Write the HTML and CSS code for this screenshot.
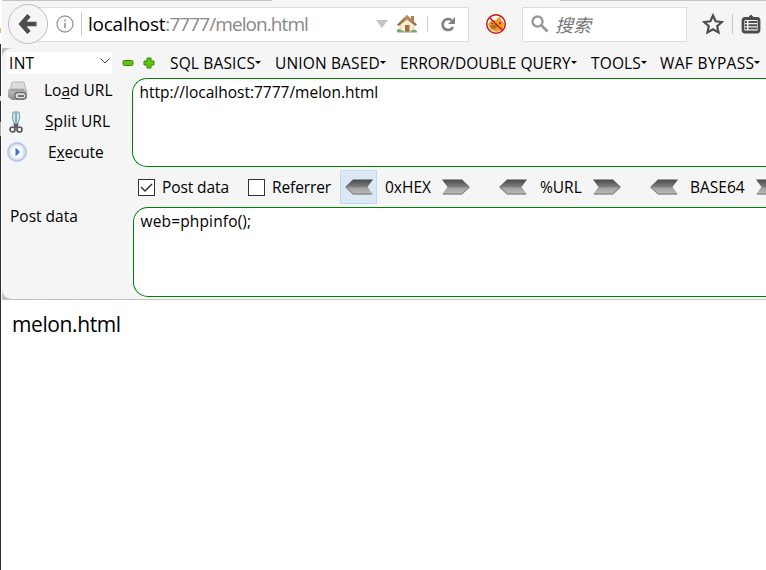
FILE: index.html
```html
<!DOCTYPE html>
<html lang="zh-CN">
<head>
<meta charset="utf-8">
<title>melon.html</title>
<link rel="stylesheet" href="styles.css">
</head>
<body>
<svg width="0" height="0" class="defs">
  <defs>
    <linearGradient id="metal" x1="0" y1="0" x2="0" y2="1">
      <stop offset="0" stop-color="#484848"/><stop offset=".5" stop-color="#808080"/>
      <stop offset=".55" stop-color="#a0a0a0"/><stop offset="1" stop-color="#bcbcbc"/>
    </linearGradient>
    <linearGradient id="roof" x1="0" y1="0" x2="0" y2="1">
      <stop offset="0" stop-color="#c99a5c"/><stop offset="1" stop-color="#8b6748"/>
    </linearGradient>
    <linearGradient id="printer" x1="0" y1="0" x2="0" y2="1">
      <stop offset="0" stop-color="#c8c8c8"/><stop offset="1" stop-color="#8c8c8c"/>
    </linearGradient>
    <symbol id="arrow-left" viewBox="0 0 28 16">
      <path d="M0 8 8 .5H28L22.500 8l5.500 7.500H8Z" fill="url(#metal)"/>
      <path d="M1 8.500l7 6.500h19" fill="none" stroke="#777"/>
    </symbol>
    <symbol id="arrow-right" viewBox="0 0 28 16">
      <path d="M28 8 20 .5H0L5.500 8 0 15.500h20Z" fill="url(#metal)"/>
      <path d="M27 8.500l-7 6.500H1" fill="none" stroke="#777"/>
    </symbol>
  </defs>
</svg>
<div class="window">
  <header class="nav">
    <button class="back" aria-label="Back"><svg width="20" height="20" viewBox="0 0 20 20"><path d="M11 1.500 3.500 10l7.500 8.500M4 10h14.500" fill="none" stroke="#4d4d4d" stroke-width="4.500"/></svg></button>
    <div class="address">
      <svg class="info" width="18" height="18" viewBox="0 0 18 18"><circle cx="9" cy="9" r="8" fill="none" stroke="#999" stroke-width="1.300"/><path d="M9 8v5M9 4.500v2" stroke="#999" stroke-width="1.700"/></svg>
      <span class="url"><b>localhost</b>:7777/melon.html</span>
      <svg class="drop" width="12" height="10" viewBox="0 0 12 10"><path d="M0 1h12L6 9Z" fill="#c4c4c4"/></svg>
      <svg class="home" width="20" height="20" viewBox="0 0 20 20"><path d="M3 9.500 10 3l7 6.500V18H3Z" fill="#f7ecd2" stroke="#c9b899" stroke-width=".6"/><path d="M14 2h3v6l-3-3Z" fill="#b77a52"/><path d="M0 10.500 10 .7l10 9.800-1.700 1.500L10 5.500 1.700 12Z" fill="url(#roof)"/><path d="M8 11h4.500v7H8Z" fill="#a96c3f"/><path d="M0 16q2-2 4 0 2 0 3 2H0ZM14 18q0-3 3-2 3-1 3 2Z" fill="#6aaa60"/><path d="M0 17.500h20v1H0Z" fill="#a4a39a"/></svg>
      <svg class="reload" width="16" height="16" viewBox="0 0 16 16"><path d="M11.400 4.100A5.500 5.500 0 1 0 13 11" fill="none" stroke="#808080" stroke-width="2.700"/><path d="M15 1v7H8Z" fill="#808080"/></svg>
    </div>
    <svg class="blocked" width="22" height="22" viewBox="0 0 22 22"><path d="m3 11 3-3 5-1 4-4 1 4 3 3-1 6-6 3-6-2Z" fill="#ef9b24"/><path d="M5 13q5-3 8 0l-3 3-4-1Z" fill="#b66c25"/><path d="m14 9 2 1-2 1M6 10l2 1" stroke="#5a3821" fill="none"/><circle cx="11" cy="11" r="9.300" fill="none" stroke="#d01717" stroke-width="1.500"/><path d="m4.500 4.500 13 13" stroke="#d01717" stroke-width="1.500"/></svg>
    <div class="search"><svg width="18" height="18" viewBox="0 0 18 18"><circle cx="6.500" cy="6.500" r="5" fill="none" stroke="#999" stroke-width="2.400"/><path d="m10.500 10.500 6 6" stroke="#999" stroke-width="2.800"/></svg><i>搜索</i></div>
    <svg class="star" width="22" height="22" viewBox="0 0 22 22"><path d="m11 2.500 2.600 5.800 6.200.7-4.600 4.200 1.300 6.200L11 16.300l-5.500 3.100 1.300-6.200L2.200 9l6.200-.7Z" fill="none" stroke="#4d4d4d" stroke-width="2.200"/></svg>
    <svg class="clip" width="20" height="20" viewBox="0 0 20 20"><path d="M6 4.500 10 .5l4 4Z" fill="#4d4d4d"/><rect x="2" y="4.500" width="16" height="13.500" rx="2" fill="none" stroke="#4d4d4d" stroke-width="2.800"/><path d="M4 8h2M4 11.200h2M4 14.400h2M7.500 8H16M7.500 11.200H16M7.500 14.400H16" stroke="#4d4d4d" stroke-width="1.900"/></svg>
  </header>
  <div class="toolbox">
  <section class="hackbar">
    <div class="menu">
      <div class="select"><span>INT</span><svg width="10" height="6" viewBox="0 0 10 6"><path d="m.5.5 4.500 4.500L9.500.5" fill="none" stroke="#444"/></svg></div>
      <svg class="minus" width="12" height="12" viewBox="0 0 12 12"><rect x="1" y="3.500" width="10" height="5" rx="1.500" fill="#5fc60c" stroke="#368606"/></svg>
      <svg class="plus" width="12" height="12" viewBox="0 0 12 12"><path d="M4 1h4v3h3v4H8v3H4V8H1V4h3Z" fill="#5fc60c" stroke="#368606" stroke-linejoin="round"/></svg>
      <span class="item m1">SQL BASICS</span><span class="item m2">UNION BASED</span><span class="item m3">ERROR/DOUBLE QUERY</span><span class="item m4">TOOLS</span><span class="item m5">WAF BYPASS</span>
    </div>
    <div class="row main-row">
      <div class="actions">
        <div class="action"><svg width="22" height="20" viewBox="0 0 22 20"><path d="M5 1h12l2 8H3Z" fill="#dcdcdc" stroke="#bbb"/><path d="M1 8.500 4 7h13l3 2v8l-3 2H5l-4-3Z" fill="url(#printer)"/><path d="M3 9h14" stroke="#888"/><rect x="8" y="11.500" width="11" height="6.500" rx="3" fill="#ddd" stroke="#707070" stroke-width="1.300"/><path d="M11 15h6" stroke="#666" stroke-width="1.800"/></svg><span class="a1">Lo<u>a</u>d URL</span></div>
        <div class="action"><svg width="22" height="24" viewBox="0 0 22 24"><path d="M6 2q-2 5 1 12l2-1V2ZM12 2q2 5-1 12l-2-1V2Z" fill="#c9e2eb" stroke="#7ba0ad"/><path d="m7 14 4 4M11 14l-4 4" stroke="#555" stroke-width="2"/><circle cx="5.500" cy="19.500" r="2.500" fill="none" stroke="#555" stroke-width="1.700"/><circle cx="12.500" cy="19.500" r="2.500" fill="none" stroke="#555" stroke-width="1.700"/></svg><span class="a2"><u>S</u>plit URL</span></div>
        <div class="action"><svg width="22" height="22" viewBox="0 0 22 22"><circle cx="10" cy="10" r="9" fill="#e4ecf8" stroke="#b4c8ea" stroke-width="2"/><circle cx="10" cy="10" r="6.500" fill="#fff" stroke="#d8e2f0"/><path d="m8.500 5.500 4.500 4.500-4.500 4.500Z" fill="#3976c8"/></svg><span class="a3">E<u>x</u>ecute</span></div>
      </div>
      <div class="field first"><span>http://localhost:7777/melon.html</span></div>
    </div>
    <div class="options">
      <span class="check"><svg width="15" height="15" viewBox="0 0 15 15"><path d="m2 7 4 4 7-7" fill="none" stroke="#333" stroke-width="1.500"/></svg></span><span class="o1">Post data</span>
      <span class="check"></span><span class="o2">Referrer</span>
      <span class="hot"><svg width="28" height="16"><use href="#arrow-left"/></svg></span><span class="o3">0xHEX</span><svg width="28" height="16"><use href="#arrow-right"/></svg>
      <svg class="left" width="28" height="16"><use href="#arrow-left"/></svg><span class="o4">%URL</span><svg width="28" height="16"><use href="#arrow-right"/></svg>
      <svg class="left" width="28" height="16"><use href="#arrow-left"/></svg><span class="o5">BASE64</span><svg width="28" height="16"><use href="#arrow-right"/></svg>
    </div>
    <div class="row"><span class="label">Post data</span><div class="field second"><span>web=phpinfo();</span></div></div>
  </section>
  </div>
  <main>melon.html</main>
</div>
</body>
</html>
```

FILE: styles.css
```css
* { box-sizing: border-box; }
body { margin: 0; width: 766px; height: 570px; overflow: hidden; background: #fff; color: #000; font: 15.5px/20px "Open Sans", "Noto Sans CJK SC", sans-serif; }
svg { display: block; flex: none; }
.defs { position: absolute; }
.window { height: 570px; padding-left: 1px; background: linear-gradient(#fff 28px, #e8b060 28px 33px, #fff 33px 44px, #302d35 44px 96px, #ddd 96px 101px, #302d35 101px 122px, #aaa 122px 136px, #302d35 136px) 0 0 / 1px 100% no-repeat; }
span { white-space: nowrap; }
.nav { display: flex; align-items: center; height: 48px; margin-left: 1px; background: linear-gradient(90deg, #c4c4c4 270px, #f5f5f5 270px 558px, #c4c4c4 558px) 0 0 / 100% 1px no-repeat, #f5f5f5; }
.back { flex: none; display: grid; place-items: center; width: 40px; height: 40px; margin-left: 6px; padding: 0; border: 1px solid #bdbdbd; border-radius: 50%; background: #f6f6f6; z-index: 1; }
.address { flex: none; display: flex; align-items: center; width: 432px; height: 35px; margin-left: -11px; padding-left: 18px; border: 1px solid #ddd; background: #fff; }
.url { flex: none; margin-left: 7px; padding-left: 6px; border-left: 1px solid #ccc; width: 288px; font-size: 19px; line-height: 24px; color: #888; letter-spacing: -.92px; }
.url b { font-weight: 400; color: #000; letter-spacing: -.25px; }
.drop { margin-left: 7px; }
.home { margin-left: 9px; }
.reload { width: 16px; margin-left: 10px; padding-left: 12px; box-sizing: content-box; border-left: 1px solid #ccc; height: 16px; }
.blocked { margin-left: 16px; }
.search { display: flex; align-items: center; gap: 6px; width: 165px; height: 35px; margin-left: 15px; padding-left: 8px; border: 1px solid #ddd; background: #fff; color: #777; font: 18px/24px "Noto Sans CJK SC", sans-serif; }
.star { margin-left: 15px; }
.clip { margin-left: 8px; padding-left: 8px; box-sizing: content-box; border-left: 1px solid #c4c4c4; }
.toolbox { margin-left: 1px; background: #c2c2c2; }
.hackbar { height: 252px; border-bottom: 1px solid #c2c2c2; border-radius: 10px 0 0 10px; background: #f5f5f5; }
.menu { display: flex; align-items: center; height: 30px; padding-left: 5px; }
.select { flex: none; display: flex; align-items: center; justify-content: space-between; width: 105px; height: 22px; padding: 0 2px; background: #fff; }
.select span { margin-top: -1px; letter-spacing: .3px; }
.select svg { margin-top: -4px; }
.item { margin-top: -1px; }
.minus { margin-left: 10px; }
.plus { margin-left: 9px; margin-right: 1px; }
.item { flex: none; display: flex; align-items: center; }
.item::after { content: ""; border: 3px solid transparent; border-top-color: #000; border-bottom: 0; }
.m1 { margin-left: 14px; width: 105px; letter-spacing: .15px; }
.m2 { width: 125px; letter-spacing: .15px; }
.m3 { width: 191px; }
.m4 { width: 69px; letter-spacing: .15px; }
.m5 { letter-spacing: .35px; }
.row { display: flex; }
.main-row { height: 89px; }
.actions { width: 130px; }
.action { display: flex; align-items: center; height: 31px; padding-left: 5px; margin-top: -3px; margin-bottom: 3px; }
.action span { margin-top: -1px; }
.action .a1 { margin-left: 15px; }
.action .a2 { margin-left: 16px; letter-spacing: .1px; }
.action .a3 { margin-left: 19px; letter-spacing: -.15px; }
u { text-underline-offset: 2px; }
.field { flex: 1; border: 1px solid #008000; border-right: 0; border-radius: 15px 0 0 15px; background: #fff; padding: 3px 6.5px; }
.first { height: 89px; }
.second { height: 90px; letter-spacing: .15px; }
.options { display: flex; align-items: center; height: 40px; padding-left: 136px; overflow: hidden; }
.options > * { flex: none; }
.check { width: 17px; height: 17px; border: 1px solid #333; background: #fff; }
.o1 { width: 87px; margin-left: 7px; letter-spacing: -.1px; }
.o2 { width: 68px; margin-left: 7px; letter-spacing: -.1px; }
.o1 + .check { margin-left: -1px; }
.hot { display: grid; place-items: center; width: 37px; height: 34px; border: 1px solid #c0dcf3; background: #dce9f4; }
.o3 { width: 65px; padding-left: 8px; }
.left { margin-left: 29px; }
.o4 { width: 66px; padding-left: 13px; }
.o5 { width: 78px; padding-left: 12px; }
.label { width: 131px; padding-left: 8px; margin-top: -1px; }
main { padding: 10px 11px; font-size: 21px; line-height: 29px; letter-spacing: -.4px; }
```
